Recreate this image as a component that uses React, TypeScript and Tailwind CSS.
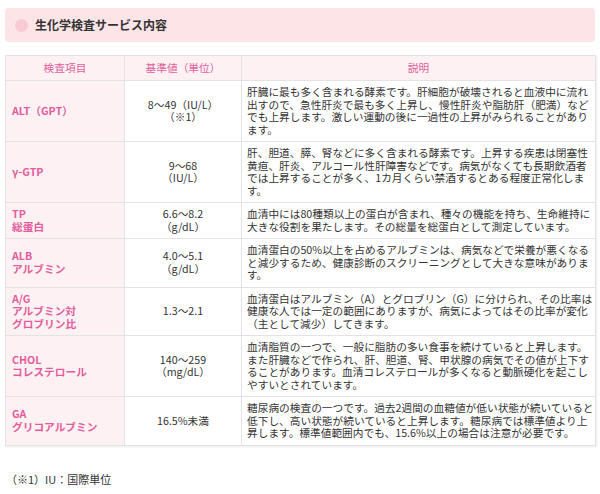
import React from "react";

type Row = { label: string[]; value: string[]; desc: string[] };

const rows: Row[] = [
  {
    label: ["ALT（GPT）"],
    value: ["8～49（IU/L）", "（※1）"],
    desc: [
      "肝臓に最も多く含まれる酵素です。肝細胞が破壊されると血液中に流れ",
      "出すので、急性肝炎で最も多く上昇し、慢性肝炎や脂肪肝（肥満）など",
      "でも上昇します。激しい運動の後に一過性の上昇がみられることがあり",
      "ます。",
    ],
  },
  {
    label: ["γ-GTP"],
    value: ["9～68", "（IU/L）"],
    desc: [
      "肝、胆道、膵、腎などに多く含まれる酵素です。上昇する疾患は閉塞性",
      "黄疸、肝炎、アルコール性肝障害などです。病気がなくても長期飲酒者",
      "では上昇することが多く、1カ月くらい禁酒するとある程度正常化しま",
      "す。",
    ],
  },
  {
    label: ["TP", "総蛋白"],
    value: ["6.6～8.2", "（g/dL）"],
    desc: [
      "血清中には80種類以上の蛋白が含まれ、種々の機能を持ち、生命維持に",
      "大きな役割を果たします。その総量を総蛋白として測定しています。",
    ],
  },
  {
    label: ["ALB", "アルブミン"],
    value: ["4.0～5.1", "（g/dL）"],
    desc: [
      "血清蛋白の50%以上を占めるアルブミンは、病気などで栄養が悪くなる",
      "と減少するため、健康診断のスクリーニングとして大きな意味がありま",
      "す。",
    ],
  },
  {
    label: ["A/G", "アルブミン対", "グロブリン比"],
    value: ["1.3～2.1"],
    desc: [
      "血清蛋白はアルブミン（A）とグロブリン（G）に分けられ、その比率は",
      "健康な人では一定の範囲にありますが、病気によってはその比率が変化",
      "（主として減少）してきます。",
    ],
  },
  {
    label: ["CHOL", "コレステロール"],
    value: ["140～259", "（mg/dL）"],
    desc: [
      "血清脂質の一つで、一般に脂肪の多い食事を続けていると上昇します。",
      "また肝臓などで作られ、肝、胆道、腎、甲状腺の病気でその値が上下す",
      "ることがあります。血清コレステロールが多くなると動脈硬化を起こし",
      "やすいとされています。",
    ],
  },
  {
    label: ["GA", "グリコアルブミン"],
    value: ["16.5%未満"],
    desc: [
      "糖尿病の検査の一つです。過去2週間の血糖値が低い状態が続いていると",
      "低下し、高い状態が続いていると上昇します。糖尿病では標準値より上",
      "昇します。標準値範囲内でも、15.6%以上の場合は注意が必要です。",
    ],
  },
];

export default function App() {
  return (
    <div
      className="w-[600px] h-[494px] bg-white px-[5px] pt-[8px] text-[#333]"
      style={{ fontFamily: '"Noto Sans CJK JP", "Noto Sans", sans-serif' }}
    >
      <div className="h-[34px] rounded-[4px] bg-[#fde4e7] flex items-center pl-[10px]">
        <span className="w-[13px] h-[13px] rounded-full bg-[#f8cbd2] mr-[7px]" />
        <span className="text-[12px] font-bold text-[#333] leading-none">生化学検査サービス内容</span>
      </div>

      <table className="mt-[13px] w-[590px] table-fixed border-collapse shadow-[1px_1px_2px_rgba(0,0,0,0.08)] text-[10.7px] leading-[12.5px]">
        <colgroup>
          <col className="w-[119px]" />
          <col className="w-[117px]" />
          <col className="w-[354px]" />
        </colgroup>
        <thead>
          <tr className="h-[25px] bg-[#fdf1f3]">
            <th className="border border-[#e3e3e3] font-normal text-[#e05f9c] text-center align-middle">検査項目</th>
            <th className="border border-[#e3e3e3] font-normal text-[#e05f9c] text-center align-middle">基準値（単位）</th>
            <th className="border border-[#e3e3e3] font-normal text-[#e05f9c] text-center align-middle">説明</th>
          </tr>
        </thead>
        <tbody>
          {rows.map((r, i) => (
            <tr key={i}>
              <td className="border border-[#e3e3e3] bg-[#fdf1f3] px-[6px] py-[5px] align-middle font-bold text-[#e25d9c]">
                {r.label.map((l, j) => (
                  <div key={j}>{l}</div>
                ))}
              </td>
              <td className="border border-[#e3e3e3] px-[4px] py-[5px] align-middle text-center text-[#333]">
                {r.value.map((v, j) => (
                  <div key={j}>{v}</div>
                ))}
              </td>
              <td className="border border-[#e3e3e3] px-[5px] py-[5px] align-middle text-[#333] whitespace-nowrap">
                {r.desc.map((d, j) => (
                  <div key={j}>{d}</div>
                ))}
              </td>
            </tr>
          ))}
        </tbody>
      </table>

      <div className="mt-[26px] pl-[1px] text-[11px] leading-[15px] text-[#333]">（※1）IU：国際単位</div>
    </div>
  );
}
